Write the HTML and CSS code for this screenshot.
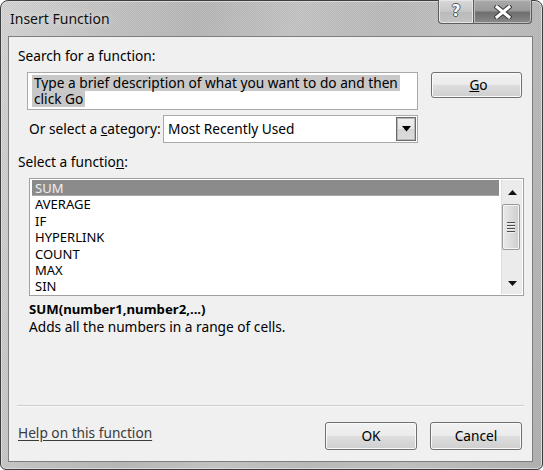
FILE: index.html
```html
<!DOCTYPE html>
<html>
<head>
<meta charset="utf-8">
<title>Insert Function</title>
<link rel="stylesheet" href="styles.css">
</head>
<body>
<div class="window">
  <div class="titlebar">
    <span class="title">Insert Function</span>
    <div class="caption-btns">
      <div class="cbtn help"><span class="qmark">?</span></div>
      <div class="cbtn close">
        <svg width="18" height="14" viewBox="0 0 18 14"><path d="M3 2 L15 12 M15 2 L3 12" stroke="#3a3a3a" stroke-width="5" stroke-linecap="square"/><path d="M3 2 L15 12 M15 2 L3 12" stroke="#ffffff" stroke-width="3" stroke-linecap="square"/></svg>
      </div>
    </div>
  </div>
  <div class="client">
    <div class="label first">Search for a function:</div>
    <div class="search-row">
      <div class="search-box">
        <div class="line"><span class="sel">Type a brief description of what you want to do and then</span></div>
        <div class="line"><span class="sel">click Go</span></div>
      </div>
      <div class="btn go"><span><u>G</u>o</span></div>
    </div>
    <div class="cat-row">
      <span class="cat-label">Or select a <u>c</u>ategory:</span>
      <div class="combo">
        <span class="combo-text">Most Recently Used</span>
        <div class="drop">
          <svg width="9" height="6" viewBox="0 0 9 6"><polygon points="0,0 9,0 4.5,5.5" fill="#000"/></svg>
        </div>
      </div>
    </div>
    <div class="label second">Select a functio<u>n</u>:</div>
    <div class="listbox">
      <ul class="items">
        <li class="selected">SUM</li>
        <li>AVERAGE</li>
        <li>IF</li>
        <li>HYPERLINK</li>
        <li>COUNT</li>
        <li>MAX</li>
        <li>SIN</li>
      </ul>
      <div class="scrollbar">
        <div class="arrow up"><svg width="9" height="5" viewBox="0 0 9 5"><polygon points="0,5 9,5 4.5,0" fill="#111"/></svg></div>
        <div class="thumb"><span></span><span></span><span></span><span></span></div>
        <div class="track"></div>
        <div class="arrow down"><svg width="9" height="5" viewBox="0 0 9 5"><polygon points="0,0 9,0 4.5,5" fill="#111"/></svg></div>
      </div>
    </div>
    <div class="sig">SUM(number1,number2,...)</div>
    <div class="desc">Adds all the numbers in a range of cells.</div>
    <div class="separator"></div>
    <div class="footer">
      <a class="help-link">Help on this function</a>
      <div class="buttons">
        <div class="btn ok"><span>OK</span></div>
        <div class="btn cancel"><span>Cancel</span></div>
      </div>
    </div>
  </div>
</div>
</body>
</html>
```
FILE: styles.css
```css
html, body {
  margin: 0;
  padding: 0;
  background: #ffffff;
}

.window {
  box-sizing: border-box;
  width: 543px;
  height: 470px;
  border: 1px solid #3e3e3e;
  border-radius: 8px 8px 6px 6px;
  padding: 0 9px 7px 7px;
  display: flex;
  flex-direction: column;
  background:
    repeating-conic-gradient(rgba(0, 0, 0, 0.05) 0 25%, rgba(255, 255, 255, 0.04) 0 50%) 0 0 / 2px 2px,
    linear-gradient(100deg, #d6d6d6 0%, #c4c4c4 18%, #b9b9b9 32%, #c6c6c6 48%, #bcbcbc 62%, #c2c2c2 78%, #b2b2b2 100%);
  box-shadow: inset 0 0 0 1px #dadada;
  font-family: "Noto Sans", "Open Sans", sans-serif;
  color: #000;
}

.titlebar {
  height: 35px;
  display: flex;
  align-items: center;
  flex: none;
}

.title {
  padding-left: 2px;
  font-size: 14px;
  color: #111;
  text-shadow: 0 0 6px #e8e8e8;
}

.caption-btns {
  margin-left: auto;
  margin-right: 1px;
  align-self: flex-start;
  margin-top: -1px;
  display: flex;
  height: 24px;
}

.cbtn {
  box-sizing: border-box;
  height: 24px;
  border: 1px solid #5c5c5c;
  border-top: none;
  display: flex;
  align-items: center;
  justify-content: center;
}

.cbtn.help {
  width: 35px;
  border-right: none;
  border-radius: 0 0 0 4px;
  background: linear-gradient(#d9d9d9, #c6c6c6 50%, #b9b9b9 51%, #c4c4c4);
  box-shadow: inset 0 0 0 1px #e6e6e6;
}

.qmark {
  font-family: "DejaVu Sans", sans-serif;
  font-weight: bold;
  font-size: 15px;
  color: #fafafa;
  text-shadow: -1px 0 #555, 1px 0 #555, 0 -1px #555, 0 1px #555;
  line-height: 1;
  margin-top: -1px;
}

.cbtn.close {
  width: 59px;
  border-radius: 0 0 4px 0;
  background: linear-gradient(#a9a9a9, #9a9a9a 45%, #6e6e6e 55%, #8a8a8a);
  box-shadow: inset 0 0 0 1px #bdbdbd;
}

.client {
  flex: 1;
  box-sizing: border-box;
  border: 1px solid #7e7e7e;
  background: #f0f0f0;
  padding: 0 10px 0 9px;
  display: flex;
  flex-direction: column;
  font-size: 13.7px;
  line-height: 16px;
}

.label.first {
  margin-top: 11px;
}

.label.second {
  margin-top: 11px;
}

.search-row {
  margin-top: 8px;
  display: flex;
  align-items: flex-start;
  gap: 13px;
}

.search-box {
  box-sizing: border-box;
  margin-left: 9px;
  width: 391px;
  height: 38px;
  border: 1px solid #a9a9a9;
  background: #fff;
  padding: 2px 0 0 4px;
}

.line {
  height: 16px;
  line-height: 16px;
}

.sel {
  display: inline-block;
  background: #c8c8c8;
  padding: 0 2px;
  height: 16px;
  line-height: 16px;
  white-space: nowrap;
}

.btn {
  box-sizing: border-box;
  width: 91px;
  height: 26px;
  border: 1px solid #707070;
  border-radius: 3px;
  background: linear-gradient(#f2f2f2 0%, #ebebeb 48%, #dddddd 52%, #cfcfcf 100%);
  box-shadow: inset 0 0 0 1px #fbfbfb;
  display: flex;
  align-items: center;
  justify-content: center;
  color: #000;
}

.btn.go span {
  margin-left: 4px;
}

.cat-row {
  margin-top: 5px;
  display: flex;
  align-items: center;
  height: 28px;
}

.cat-label {
  margin-left: 11px;
  width: 134px;
  white-space: nowrap;
}

.combo {
  box-sizing: border-box;
  width: 255px;
  height: 28px;
  border: 1px solid #a9a9a9;
  background: #fff;
  display: flex;
  align-items: center;
}

.combo-text {
  padding-left: 4px;
}

.drop {
  box-sizing: border-box;
  margin-left: auto;
  margin-right: 1px;
  width: 20px;
  height: 24px;
  border: 1px solid #6a6a6a;
  box-shadow: inset 0 0 0 1px #b8b8b8;
  background: linear-gradient(#f0f0f0, #e6e6e6 50%, #d5d5d5 51%, #dcdcdc);
  display: flex;
  align-items: center;
  justify-content: center;
}

.drop svg {
  margin-top: -1px;
}

.listbox {
  box-sizing: border-box;
  margin: 8px -2px 0 11px;
  height: 118px;
  border: 1px solid #a0a0a0;
  background: #fff;
  display: flex;
  padding: 1px;
}

.items {
  list-style: none;
  margin: 0;
  padding: 0 1px;
  flex: 1;
  font-size: 13px;
  line-height: 16.4px;
}

.items li {
  padding-left: 3px;
  height: 16.4px;
  white-space: nowrap;
}

.items li.selected {
  background: #8b8b8b;
  color: #efefef;
  box-shadow: inset 0 -1px 0 #a8a8a8;
}

.scrollbar {
  width: 20px;
  margin-left: 1px;
  display: flex;
  flex-direction: column;
  background: #ebebeb;
  border-left: 1px dotted #d0d0d0;
}

.arrow {
  height: 22px;
  display: flex;
  align-items: center;
  justify-content: center;
  flex: none;
}

.arrow.up {
  height: 23px;
  padding-top: 2px;
  box-sizing: border-box;
}

.thumb {
  box-sizing: border-box;
  margin: 1px 2px 0 0;
  height: 46px;
  border: 1px solid #9a9a9a;
  border-radius: 2px;
  background: linear-gradient(90deg, #e9e9e9, #dcdcdc 50%, #cdcdcd 100%);
  box-shadow: inset 0 0 0 1px #f4f4f4;
  display: flex;
  flex-direction: column;
  align-items: center;
  justify-content: center;
  gap: 2px;
  flex: none;
}

.thumb span {
  display: block;
  width: 8px;
  height: 1px;
  background: #4c4c4c;
  box-shadow: 0 1px 0 #f0f0f0;
}

.track {
  flex: 1;
}

.sig {
  margin: 4px 0 0 11px;
  font-weight: bold;
  font-size: 13.2px;
  line-height: 18px;
}

.desc {
  margin-left: 11px;
  line-height: 18px;
}

.separator {
  margin: 69px -2px 0 -1px;
  height: 1px;
  background: #cdcdcd;
  box-shadow: 0 1px 0 #fafafa;
}

.footer {
  margin-top: 16px;
  display: flex;
  align-items: flex-start;
}

.help-link {
  margin-top: 3px;
  color: #3b3b3b;
  text-decoration: underline;
  text-underline-offset: 2px;
}

.buttons {
  margin-left: auto;
  display: flex;
  gap: 13px;
}

.buttons .btn {
  width: 92px;
  height: 28px;
}
```
